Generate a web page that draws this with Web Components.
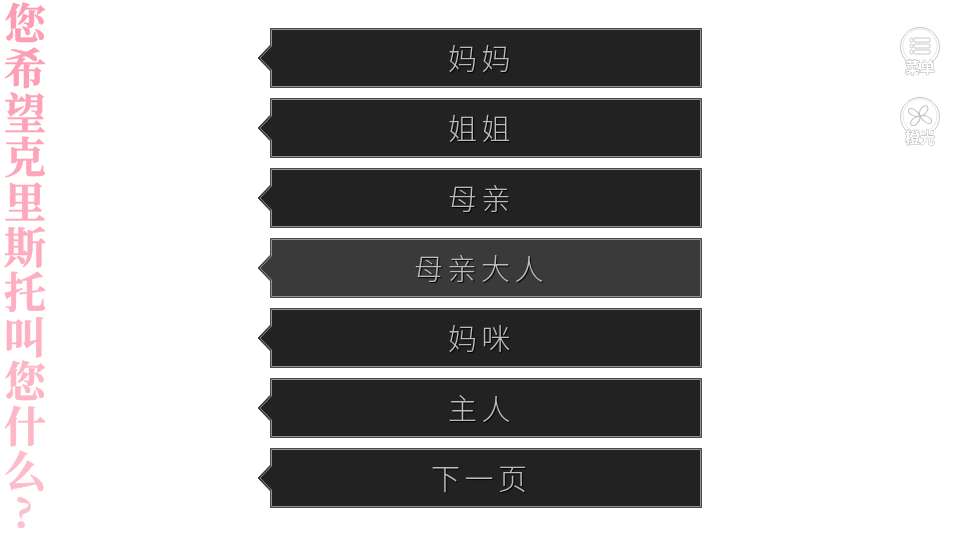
<!DOCTYPE html>
<html lang="zh"><head><meta charset="utf-8"><style>
html,body{margin:0;background:#fff}
body{width:958px;height:536px;overflow:hidden;font-family:"Noto Sans CJK SC",sans-serif}
</style></head><body>
<game-screen>
<v-title slot="title">您希望克里斯托叫您什么?</v-title>
<choice-btn>妈妈</choice-btn>
<choice-btn>姐姐</choice-btn>
<choice-btn>母亲</choice-btn>
<choice-btn active>母亲大人</choice-btn>
<choice-btn>妈咪</choice-btn>
<choice-btn>主人</choice-btn>
<choice-btn>下一页</choice-btn>
<side-icon slot="side" label="菜单" kind="menu"></side-icon>
<side-icon slot="side" label="橙光" kind="fan"></side-icon>
</game-screen>
<script>
customElements.define('game-screen',class extends HTMLElement{constructor(){super();this.attachShadow({mode:'open'}).innerHTML=`<style>
:host{display:grid;grid-template-columns:270px 432px 1fr;width:958px;height:536px}
.menu{display:flex;flex-direction:column;gap:10px;padding-top:28px}
.side{display:flex;flex-direction:column;align-items:flex-end;gap:10px;padding:26px 17px 0 0}
</style><div><slot name="title"></slot></div><div class="menu"><slot></slot></div><div class="side"><slot name="side"></slot></div>`}});
customElements.define('v-title',class extends HTMLElement{constructor(){super();const s=this.attachShadow({mode:'open'});
s.innerHTML=`<style>
:host{display:block;width:50px}
.t{display:flex;flex-direction:column;align-items:center;margin-top:-1px}
span{display:block;height:44.8px;line-height:44.8px;font-size:42px;font-weight:700;font-family:"Noto Serif CJK SC","Noto Sans CJK SC",serif;will-change:transform;-webkit-text-stroke:.5px currentColor}
span:last-child{font-size:40px;line-height:36px;padding-right:4px}
</style><div class="t"></div>`;
const t=s.querySelector('.t');const cols=['#fd9db3','#fd9fb4','#fda2b7','#fda5b9','#fda8bc','#fdabbe','#fdaec0','#fdb1c3','#fdb4c5','#fdb8c8','#fdbccb','#fdc0ce'];
[...this.textContent].forEach((c,i)=>{const e=document.createElement('span');e.textContent=c;e.style.color=cols[i];t.append(e)})}});
customElements.define('choice-btn',class extends HTMLElement{constructor(){super();this.attachShadow({mode:'open'}).innerHTML=`<style>
:host{display:flex;position:relative;width:432px;height:60px;box-sizing:border-box;align-items:center;justify-content:center;--f:#222;padding-right:9px}
:host([active]){--f:#3a3a3a}
svg{position:absolute;left:-14px;top:0;width:446px;height:60px}
.l{position:relative;font-family:"Noto Sans CJK SC",sans-serif;font-size:29px;letter-spacing:4.500px;color:#bcbcbc;line-height:60px;font-weight:200;margin-top:-2px;will-change:transform;text-shadow:1px 1px 1px #000}
</style><svg viewBox="0 0 446 60"><path d="M14.500 .5H445.500V59.500H14.500V43L2 30L14.500 17Z" fill="var(--f)" stroke="#4a4a4a"/><path d="M15.500 1.500H444.500V58.500H15.500V42L4 30L15.500 18Z" fill="var(--f)" stroke="#929292"/></svg><span class="l"><slot></slot></span>`}});
customElements.define('side-icon',class extends HTMLElement{constructor(){super();const k=this.getAttribute('kind');
const g=k==='menu'?`<g fill="none" stroke="#c8c8c8"><rect x="15" y="12" width="16" height="4" rx="1"/><rect x="15" y="18" width="16" height="4" rx="1"/><rect x="15" y="24" width="16" height="4" rx="1"/><rect x="11" y="12" width="3" height="4" rx="1.500"/><rect x="11" y="18" width="3" height="4" rx="1.500"/><rect x="11" y="24" width="3" height="4" rx="1.500"/></g>`
:`<g fill="none" stroke="#c0c0c0" transform="rotate(28 21 20)"><path d="M21 20C17 17 18 9 22 8C26 8 26 16 21 20Z"/><path d="M21 20C25 16 33 16 34 20C34 24 26 24 21 20Z"/><path d="M21 20C24 24 22 32 18 32C14 32 15 24 21 20Z"/><path d="M21 20C17 24 9 24 8 20C8 16 16 16 21 20Z"/></g>`;
this.attachShadow({mode:'open'}).innerHTML=`<style>
:host{display:flex;flex-direction:column;align-items:center;width:42px;height:60px}
svg{width:42px;height:42px;display:block}
.l{font-size:15px;line-height:16px;margin-top:-9px;font-weight:700;color:#fff;-webkit-text-stroke:.9px #b0b0b0;paint-order:stroke fill;position:relative;white-space:nowrap;will-change:transform}
</style><svg viewBox="0 0 42 42"><path d="M10 37A19.500 19.500 0 1 1 32 37" fill="none" stroke="#c8c8c8"/><path d="M11.500 34A17 17 0 1 1 30.500 34" fill="none" stroke="#dcdcdc" stroke-width=".7"/>${g}</svg><span class="l">${this.getAttribute('label')}</span>`}});
</script>
</body></html>
